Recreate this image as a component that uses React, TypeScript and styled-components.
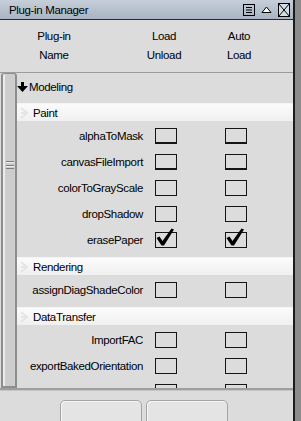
import React from 'react';
import styled, { createGlobalStyle } from 'styled-components';

type Plugin = { name: string; load?: boolean; auto?: boolean; heavy?: boolean };
type Group = { title: string; plugins: Plugin[] };

const GROUPS: Group[] = [
  {
    title: 'Paint',
    plugins: [
      { name: 'alphaToMask', heavy: true },
      { name: 'canvasFileImport', heavy: true },
      { name: 'colorToGrayScale' },
      { name: 'dropShadow' },
      { name: 'erasePaper', load: true, auto: true },
    ],
  },
  { title: 'Rendering', plugins: [{ name: 'assignDiagShadeColor' }] },
  {
    title: 'DataTransfer',
    plugins: [{ name: 'ImportFAC' }, { name: 'exportBakedOrientation' }, { name: 'exportFrameData' }],
  },
];

const GlobalStyle = createGlobalStyle`
  html, body {
    margin: 0;
    padding: 0;
    background: #8c8c8c;
  }
  body {
    font-family: "Liberation Sans", Arial, sans-serif;
    font-size: 11.5px;
    letter-spacing: -0.35px;
    color: #000;
  }
`;

/** 체크 표시 */
function Check() {
  return (
    <CheckMark viewBox="0 0 22 16" width={22} height={16}>
      <polygon points="1.5,6 4.5,4.5 7.5,9 16.5,-3.5 19,-2.5 9,13.5 6.5,13.5" fill="#000" />
    </CheckMark>
  );
}

function CheckBox({ checked, heavy }: { checked?: boolean; heavy?: boolean }) {
  return <Box $heavy={heavy}>{checked && <Check />}</Box>;
}

export default function App() {
  return (
    <>
      <GlobalStyle />
      <Screen>
        <Window>
          {/* 타이틀 바 */}
          <TitleBar>
            <Title>Plug-in Manager</Title>
            <TitleIcons>
              <svg width="12" height="12" viewBox="0 0 12 12">
                <rect x="0.5" y="0.5" width="11" height="11" fill="none" stroke="#000" />
                <path d="M3 3.5h6M3 6h6M3 8.5h6" stroke="#000" />
              </svg>
              <svg width="11" height="7" viewBox="0 0 11 7">
                <path d="M1 6.5 L5.5 1 L10 6.5 Z" fill="#fff" stroke="#000" strokeLinejoin="round" />
              </svg>
              <svg width="12" height="14" viewBox="0 0 12 14">
                <rect x="0.5" y="0.5" width="11" height="13" fill="#d6dde5" stroke="#000" />
                <path d="M0.5 0.5 L11.5 13.5 M11.5 0.5 L0.5 13.5" stroke="#000" />
              </svg>
            </TitleIcons>
          </TitleBar>

          {/* 컬럼 헤더 */}
          <Header>
            <HeadCell>
              Plug-in
              <br />
              Name
            </HeadCell>
            <HeadCell>
              Load
              <br />
              Unload
            </HeadCell>
            <HeadCell $shift={2}>
              Auto
              <br />
              Load
            </HeadCell>
          </Header>

          <Body>
            <Scrollbar>
              <Thumb>
                <Grip />
              </Thumb>
            </Scrollbar>
            <List>
              <CategoryRow>
                <svg width="11" height="11" viewBox="0 0 11 11">
                  <rect x="4" y="0" width="3" height="5" fill="#000" />
                  <path d="M0 4 H11 L5.5 10 Z" fill="#000" />
                </svg>
                Modeling
              </CategoryRow>
              {GROUPS.map(group => (
                <React.Fragment key={group.title}>
                  <Band>
                    <svg width="9" height="12" viewBox="0 0 9 12">
                      <path d="M1 1 L7 6 L1 11 M1 6 H7" fill="none" stroke="#e2e6ea" strokeWidth="2" />
                    </svg>
                    {group.title}
                  </Band>
                  {group.plugins.map(item => (
                    <Row key={item.name}>
                      <Label>{item.name}</Label>
                      <CheckBox checked={item.load} heavy={item.heavy} />
                      <CheckBox checked={item.auto} heavy={item.heavy} />
                    </Row>
                  ))}
                </React.Fragment>
              ))}
            </List>
          </Body>

          <Footer>
            <Button />
            <Button />
          </Footer>
        </Window>
      </Screen>
    </>
  );
}

const Screen = styled.div`
  height: 421px;
  overflow: hidden;
  display: flex;
  align-items: flex-start;
`;

const Window = styled.div`
  width: 293px;
  height: 421px;
  flex: none;
  display: flex;
  flex-direction: column;
  background: #dcdcdc;
  border-right: 2px solid #1c1c1c;

  & > * {
    flex: none;
  }
`;

const TitleBar = styled.div`
  height: 19px;
  display: flex;
  align-items: center;
  padding-left: 9px;
  border-bottom: 1px solid #2c2c2c;
  background: linear-gradient(#c6cfd9, #a8b4c2);
`;

const Title = styled.span`
  flex: 1;
`;

const TitleIcons = styled.div`
  display: flex;
  align-items: center;
  gap: 6px;
  padding-right: 3px;
  svg {
    display: block;
  }
`;

const Header = styled.div`
  height: 52px;
  box-sizing: border-box;
  padding-top: 7px;
  display: grid;
  grid-template-columns: 108px 112px 36px;
  line-height: 19px;
`;

const HeadCell = styled.div<{ $shift?: number }>`
  text-align: center;
  padding-left: ${p => p.$shift || 0}px;
`;

const Body = styled.div`
  height: 315px;
  display: flex;
  border-top: 1px solid #9c9c9c;
`;

const Scrollbar = styled.div`
  width: 17px;
  flex: none;
  display: flex;
  padding-left: 1px;
  box-sizing: border-box;
`;

const Thumb = styled.div`
  flex: 1;
  box-sizing: border-box;
  border: 2px solid #8e8e8e;
  border-top-width: 1px;
  border-radius: 3px 3px 0 0;
  background: linear-gradient(to right, #ececec 0 2px, #cdcdcd 2px);
  display: flex;
  justify-content: center;
  padding-top: 87px;
`;

const Grip = styled.div`
  width: 8px;
  height: 8px;
  margin-left: 1px;
  background: repeating-linear-gradient(#7c7c7c 0 1px, #eeeeee 1px 2px, transparent 2px 3.66px);
`;

const List = styled.div`
  flex: 1;
  overflow: hidden;
`;

const CategoryRow = styled.div`
  height: 24px;
  margin-top: 2px;
  display: flex;
  align-items: center;
  gap: 1px;
  svg {
    flex: none;
  }
`;

const Band = styled.div`
  height: 18px;
  margin: 4px 0 2px;
  display: flex;
  align-items: center;
  gap: 4px;
  padding-left: 3px;
  border-top: 1px solid #e6fbff;
  box-sizing: border-box;
  background: linear-gradient(#fbfbfb, #f0f0f0);
`;

const Row = styled.div`
  height: 26px;
  display: flex;
  align-items: center;
`;

const Label = styled.span`
  width: 126px;
  flex: none;
  text-align: right;
  white-space: nowrap;
  margin-right: 12px;
`;

const Box = styled.div<{ $heavy?: boolean }>`
  position: relative;
  width: 22px;
  height: 16px;
  box-sizing: border-box;
  flex: none;
  border: 1px solid #151515;
  border-bottom-width: ${p => (p.$heavy ? 2 : 1)}px;
  margin-right: 48px;
`;

const CheckMark = styled.svg`
  position: absolute;
  left: -1px;
  top: -1px;
  overflow: visible;
`;

const Footer = styled.div`
  display: flex;
  gap: 4px;
  padding: 10px 0 0 60px;
  border-top: 2px solid #9e9e9e;
  box-shadow: inset 0 1px 0 #c6c6c6;
`;

const Button = styled.div`
  width: 82px;
  height: 26px;
  box-sizing: border-box;
  border: 1px solid #a4a4a4;
  border-radius: 5px 5px 0 0;
  background: #e4e4e4;
  box-shadow: inset 1px 1px 0 #f6f6f6;
`;
